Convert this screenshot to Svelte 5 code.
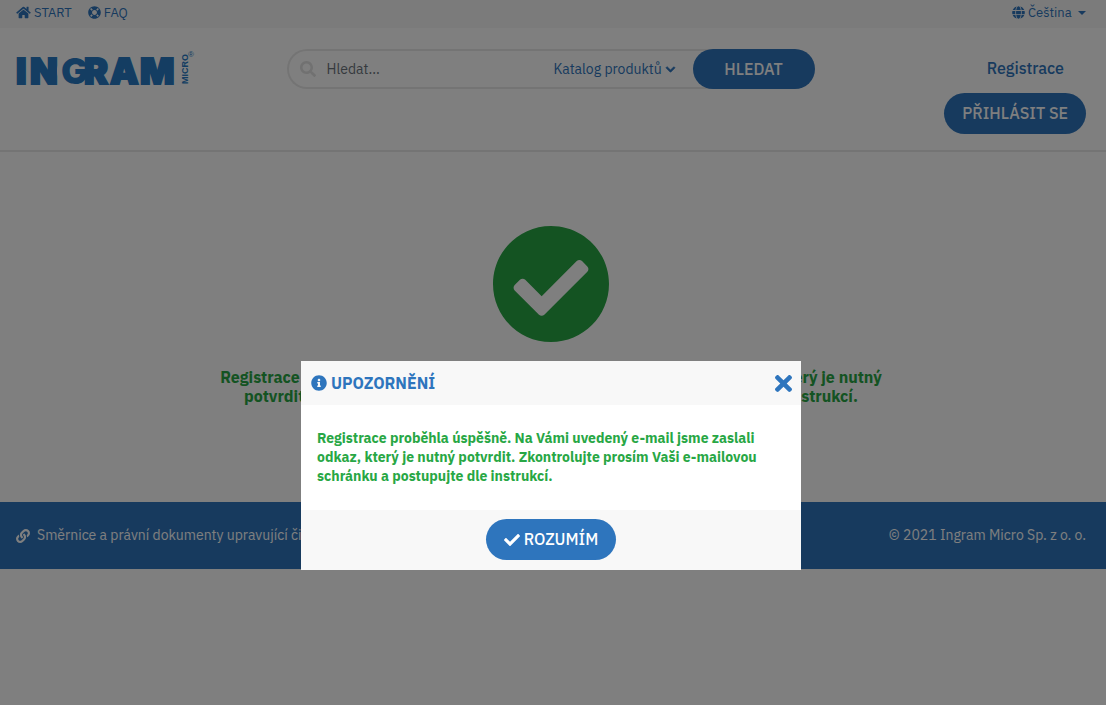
<script lang="ts">
  let search = ''
  let showModal = true

  const closeModal = () => (showModal = false)

  const icons = {
    home: {
      box: '0 0 576 512',
      d: 'M280.37 148.26L96 300.11V464a16 16 0 0 0 16 16l112.06-.29a16 16 0 0 0 15.92-16V368a16 16 0 0 1 16-16h64a16 16 0 0 1 16 16v95.64a16 16 0 0 0 16 16.05L464 480a16 16 0 0 0 16-16V300L295.67 148.26a12.19 12.19 0 0 0-15.3 0zM571.6 251.47L488 182.56V44.05a12 12 0 0 0-12-12h-56a12 12 0 0 0-12 12v72.61L318.47 43a48 48 0 0 0-61 0L4.34 251.47a12 12 0 0 0-1.6 16.9l25.5 31A12 12 0 0 0 45.15 301l235.22-193.74a12.19 12.19 0 0 1 15.3 0L530.9 301a12 12 0 0 0 16.9-1.6l25.5-31a12 12 0 0 0-1.7-16.93z'
    },
    ring: {
      box: '0 0 512 512',
      d: 'M256 8C119.033 8 8 119.033 8 256s111.033 248 248 248 248-111.033 248-248S392.967 8 256 8zm173.696 119.559l-63.399 63.399c-10.987-18.559-26.67-34.252-45.255-45.255l63.399-63.399a218.396 218.396 0 0 1 45.255 45.255zM256 352c-53.019 0-96-42.981-96-96s42.981-96 96-96 96 42.981 96 96-42.981 96-96 96zM127.559 82.304l63.399 63.399c-18.559 10.987-34.252 26.67-45.255 45.255l-63.399-63.399a218.372 218.372 0 0 1 45.255-45.255zM82.304 384.441l63.399-63.399c10.987 18.559 26.67 34.252 45.255 45.255l-63.399 63.399a218.396 218.396 0 0 1-45.255-45.255zm302.137 45.255l-63.399-63.399c18.559-10.987 34.252-26.67 45.255-45.255l63.399 63.399a218.403 218.403 0 0 1-45.255 45.255z'
    },
    globe: {
      box: '0 0 496 512',
      d: 'M336.5 160C322 70.7 287.8 8 248 8s-74 62.7-88.5 152h177zM152 256c0 22.2 1.2 43.5 3.3 64h185.3c2.1-20.5 3.3-41.8 3.3-64s-1.2-43.5-3.3-64H155.3c-2.1 20.5-3.3 41.8-3.3 64zm324.7-96c-28.6-67.9-86.5-120.4-158-141.6 24.4 33.8 41.2 84.7 50 141.6h108zM177.2 18.4C105.8 39.6 47.8 92.1 19.3 160h108c8.7-56.9 25.5-107.8 49.9-141.6zM487.4 192H372.7c2.1 21 3.3 42.5 3.3 64s-1.2 43-3.3 64h114.6c5.5-20.5 8.6-41.8 8.6-64s-3.1-43.5-8.5-64zM120 256c0-21.5 1.2-43 3.3-64H8.6C3.2 212.5 0 233.8 0 256s3.2 43.5 8.6 64h114.6c-2-21-3.2-42.5-3.2-64zm39.5 96c14.5 89.3 48.7 152 88.5 152s74-62.7 88.5-152h-177zm159.3 141.6c71.4-21.2 129.4-73.7 158-141.6h-108c-8.8 56.9-25.6 107.8-50 141.6zM19.3 352c28.6 67.9 86.5 120.4 158 141.6-24.4-33.8-41.2-84.7-50-141.6h-108z'
    },
    caret: { box: '0 0 8 4', d: 'M0 0h8L4 4z' },
    search: {
      box: '0 0 512 512',
      d: 'M505 442.7L405.3 343c-4.5-4.5-10.6-7-17-7H372c27.6-35.3 44-79.7 44-128C416 93.1 322.9 0 208 0S0 93.1 0 208s93.1 208 208 208c48.3 0 92.7-16.4 128-44v16.3c0 6.4 2.5 12.5 7 17l99.7 99.7c9.4 9.4 24.6 9.4 33.9 0l28.3-28.3c9.4-9.4 9.4-24.6.1-34zM208 336c-70.7 0-128-57.2-128-128 0-70.7 57.2-128 128-128 70.7 0 128 57.2 128 128 0 70.7-57.2 128-128 128z'
    },
    chevron: {
      box: '0 0 448 512',
      d: 'M207.029 381.476L12.686 187.132c-9.373-9.373-9.373-24.569 0-33.941l22.667-22.667c9.357-9.357 24.522-9.375 33.901-.04L224 284.505l154.745-154.021c9.379-9.335 24.544-9.317 33.901.04l22.667 22.667c9.373 9.373 9.373 24.569 0 33.941L240.971 381.476c-9.373 9.372-24.569 9.372-33.942 0z'
    },
    checkCircle: {
      box: '8 8 496 496',
      d: 'M504 256c0 136.967-111.033 248-248 248S8 392.967 8 256 119.033 8 256 8s248 111.033 248 248zM227.314 387.314l184-184c6.248-6.248 6.248-16.379 0-22.627l-22.627-22.627c-6.248-6.249-16.379-6.249-22.628 0L216 308.118l-70.059-70.059c-6.248-6.248-16.379-6.248-22.628 0l-22.627 22.627c-6.248 6.248-6.248 16.379 0 22.627l104 104c6.249 6.249 16.379 6.249 22.628.001z'
    },
    info: {
      box: '0 0 512 512',
      d: 'M256 8C119.043 8 8 119.083 8 256c0 136.997 111.043 248 248 248s248-111.003 248-248C504 119.083 392.957 8 256 8zm0 110c23.196 0 42 18.804 42 42s-18.804 42-42 42-42-18.804-42-42 18.804-42 42-42zm56 254c0 6.627-5.373 12-12 12h-88c-6.627 0-12-5.373-12-12v-24c0-6.627 5.373-12 12-12h12v-64h-12c-6.627 0-12-5.373-12-12v-24c0-6.627 5.373-12 12-12h64c6.627 0 12 5.373 12 12v100h12c6.627 0 12 5.373 12 12v24z'
    },
    times: {
      box: '0 80 352 352',
      d: 'M242.72 256l100.07-100.07c12.28-12.28 12.28-32.19 0-44.48l-22.24-22.24c-12.28-12.28-32.19-12.28-44.48 0L176 189.28 75.93 89.21c-12.28-12.28-32.19-12.28-44.48 0L9.21 111.45c-12.28 12.28-12.28 32.19 0 44.48L109.28 256 9.21 356.07c-12.28 12.28-12.28 32.19 0 44.48l22.24 22.24c12.28 12.28 32.2 12.28 44.48 0L176 322.72l100.07 100.07c12.28 12.28 32.2 12.28 44.48 0l22.24-22.24c12.28-12.28 12.28-32.19 0-44.48L242.72 256z'
    },
    check: {
      box: '0 0 512 512',
      d: 'M173.898 439.404l-166.4-166.4c-9.997-9.997-9.997-26.206 0-36.204l36.203-36.204c9.997-9.998 26.207-9.998 36.204 0L192 312.69 432.095 72.596c9.997-9.997 26.207-9.997 36.204 0l36.203 36.204c9.997 9.997 9.997 26.206 0 36.204l-294.4 294.401c-9.998 9.997-26.207 9.997-36.204-.001z'
    },
    link: {
      box: '0 0 512 512',
      d: 'M326.612 185.391c59.747 59.809 58.927 155.698.36 214.59-.11.12-.24.25-.36.37l-67.2 67.2c-59.27 59.27-155.699 59.262-214.96 0-59.27-59.26-59.27-155.7 0-214.96l37.106-37.106c9.84-9.84 26.786-3.3 27.294 10.606.648 17.722 3.826 35.527 9.69 52.721 1.986 5.822.567 12.262-3.783 16.612l-13.087 13.087c-28.026 28.026-28.905 73.66-1.155 101.96 28.024 28.579 74.086 28.749 102.325.51l67.2-67.19c28.191-28.191 28.073-73.757 0-101.83-3.701-3.694-7.429-6.564-10.341-8.569a16.037 16.037 0 0 1-6.947-12.606c-.396-10.567 3.348-21.456 11.698-29.806l21.054-21.055c5.521-5.521 14.182-6.199 20.584-1.731a152.482 152.482 0 0 1 20.522 17.197zM467.547 44.449c-59.261-59.262-155.69-59.27-214.96 0l-67.2 67.2c-.12.12-.25.25-.36.37-58.566 58.892-59.387 154.781.36 214.59a152.454 152.454 0 0 0 20.521 17.196c6.402 4.468 15.064 3.789 20.584-1.731l21.054-21.055c8.35-8.35 12.094-19.239 11.698-29.806a16.037 16.037 0 0 0-6.947-12.606c-2.912-2.005-6.64-4.875-10.341-8.569-28.073-28.073-28.191-73.639 0-101.83l67.2-67.19c28.239-28.239 74.3-28.069 102.325.51 27.75 28.3 26.872 73.934-1.155 101.96l-13.087 13.087c-4.35 4.35-5.769 10.79-3.783 16.612 5.864 17.194 9.042 34.999 9.69 52.721.509 13.906 17.454 20.446 27.294 10.606l37.106-37.106c59.271-59.259 59.271-155.699.001-214.959z'
    }
  }
</script>

{#snippet icon(name: keyof typeof icons, size: string)}
  <svg class="icon {size}" viewBox={icons[name].box} aria-hidden="true">
    <path d={icons[name].d} />
  </svg>
{/snippet}

<nav class="topbar">
  <a href="#start">{@render icon('home', 'i15')}START</a>
  <a href="#faq">{@render icon('ring', 'i13')}FAQ</a>
  <label class="language">
    {@render icon('globe', 'i13')}
    <select aria-label="Jazyk">
      <option>Čeština</option>
    </select>
    {@render icon('caret', 'i8')}
  </label>
</nav>

<header>
  <a class="logo" href="#home" aria-label="Ingram Micro">
    <svg width="182" height="42" viewBox="0 0 182 42">
      <g class="wordmark">
        <text x="0" y="35">I</text>
        <text x="14" y="35">N</text>
      </g>
      <!-- the G sits in a light disc that bites into the N -->
      <ellipse cx="57" cy="22" rx="16" ry="17" fill="#fff" />
      <g class="wordmark">
        <text x="68" y="35">R</text>
        <text x="94" y="35">A</text>
        <text x="124" y="35">M</text>
      </g>
      <text class="g" x="45" y="35">G</text>
      <text class="micro" transform="translate(172 35) rotate(-90)">MICRO</text>
      <text class="reg" x="172" y="8">®</text>
    </svg>
  </a>

  <form class="search" on:submit|preventDefault>
    <div class="field">
      {@render icon('search', 'i16')}
      <input type="text" placeholder="Hledat..." aria-label="Hledat" bind:value={search} />
      <label class="catalog">
        <select aria-label="Katalog">
          <option>Katalog produktů</option>
        </select>
        {@render icon('chevron', 'i9')}
      </label>
    </div>
    <button class="btn submit">HLEDAT</button>
  </form>

  <div class="account">
    <a href="#register">Registrace</a>
    <button class="btn">PŘIHLÁSIT SE</button>
  </div>
</header>

<main>
  {@render icon('checkCircle', 'big')}
  <p>
    Registrace proběhla úspěšně. Na Vámi uvedený e-mail jsme zaslali odkaz, který je nutný<br />
    potvrdit. Zkontrolujte prosím Vaši e-mailovou schránku a postupujte dle instrukcí.
  </p>
</main>

<footer>
  <a href="#documents">{@render icon('link', 'i14')}Směrnice a právní dokumenty upravující činnost</a>
  <span>© 2021 Ingram Micro Sp. z o. o.</span>
</footer>

{#if showModal}
  <div class="overlay">
    <div class="modal" role="dialog" aria-modal="true" aria-labelledby="modal-title">
      <div class="modal-head">
        {@render icon('info', 'i16')}
        <h2 id="modal-title">UPOZORNĚNÍ</h2>
        <button class="close" aria-label="Zavřít" on:click={closeModal}>
          {@render icon('times', 'i17')}
        </button>
      </div>
      <p class="modal-body">
        Registrace proběhla úspěšně. Na Vámi uvedený e-mail jsme zaslali<br />
        odkaz, který je nutný potvrdit. Zkontrolujte prosím Vaši e-mailovou<br />
        schránku a postupujte dle instrukcí.
      </p>
      <div class="modal-foot">
        <button class="btn" on:click={closeModal}>{@render icon('check', 'i16')}ROZUMÍM</button>
      </div>
    </div>
  </div>
{/if}

<style>
  :global(body) {
    background: #fff;
    color: #2e75bd;
    font-family: 'IBM Plex Sans', 'Open Sans', sans-serif;
    font-size: 14px;
    line-height: 19px;
  }

  a {
    color: inherit;
    text-decoration: none;
  }

  button,
  input,
  select {
    font: inherit;
    color: inherit;
    border: 0;
    padding: 0;
    background: none;
  }

  select {
    appearance: none;
  }

  .icon {
    display: block;
    flex: none;
    fill: currentColor;
  }

  .i8 {
    width: 8px;
    height: 4px;
  }

  .i9 {
    width: 9px;
    height: 11px;
    overflow: visible;
    stroke: currentColor;
    stroke-width: 36px;
  }

  .i13 {
    width: 13px;
    height: 13px;
  }

  .i14 {
    width: 14px;
    height: 14px;
  }

  .i15 {
    width: 15px;
    height: 13px;
  }

  .i16 {
    width: 16px;
    height: 16px;
  }

  .i17 {
    width: 17px;
    height: 17px;
  }

  .btn {
    display: flex;
    align-items: center;
    justify-content: center;
    gap: 4px;
    height: 41px;
    padding: 0 18px;
    border-radius: 21px;
    background: #2e75bd;
    color: #fff;
    font-size: 16px;
    font-weight: 500;
    white-space: nowrap;
  }

  .topbar {
    display: flex;
    align-items: center;
    gap: 16px;
    height: 28px;
    padding: 0 20px 3px 16px;
    box-sizing: border-box;
    background: #f7f7f7;
    font-size: 13px;
  }

  .topbar a,
  .language {
    display: flex;
    align-items: center;
    gap: 3px;
  }

  .language {
    margin-left: auto;
  }

  .language .i8 {
    margin-left: 3px;
  }

  header {
    display: grid;
    grid-template-columns: 1fr 2fr 1fr;
    align-items: start;
    padding: 21px 4px 16px 0;
    border-bottom: 2px solid #e9e9e9;
  }

  .logo {
    padding-left: 16px;
  }

  .logo svg {
    display: block;
    overflow: visible;
    fill: #287bc4;
  }

  .wordmark,
  .g {
    font-family: Inter, sans-serif;
    font-size: 36px;
    font-weight: 900;
  }

  .wordmark {
    stroke: #287bc4;
    stroke-width: 2px;
  }

  .micro {
    font-family: 'Liberation Sans', sans-serif;
    font-size: 9px;
    font-weight: 700;
  }

  .reg {
    font-family: 'Liberation Sans', sans-serif;
    font-size: 8px;
  }

  .search {
    display: flex;
    margin: 0 12px 0 11px;
  }

  .field {
    display: flex;
    flex: 1;
    align-items: center;
    min-width: 0;
    height: 40px;
    margin-right: -20px;
    padding: 0 38px 0 11px;
    box-sizing: border-box;
    border: 2px solid #e9e9e9;
    border-right: 0;
    border-radius: 20px 0 0 20px;
    color: #e2e2e2;
  }

  .field input {
    flex: 1;
    min-width: 0;
    margin-left: 11px;
    outline: 0;
    color: #6c757d;
  }

  .field input::placeholder {
    color: #6c757d;
    opacity: 1;
  }

  .catalog {
    display: flex;
    align-items: center;
    gap: 3px;
    color: #2e75bd;
  }

  .submit {
    width: 122px;
    height: 40px;
  }

  .account {
    display: flex;
    flex-direction: column;
    align-items: flex-end;
    gap: 15px;
    padding: 10px 16px 0 0;
  }

  .account a {
    margin-right: 22px;
    font-size: 16px;
    font-weight: 500;
  }

  main {
    display: flex;
    flex-direction: column;
    align-items: center;
    gap: 26px;
    padding: 74px 4px 96px 0;
    color: #28a745;
  }

  .big {
    width: 116px;
    height: 116px;
  }

  main p {
    margin: 0;
    font-size: 16px;
    font-weight: 700;
    text-align: center;
  }

  footer {
    display: flex;
    align-items: center;
    justify-content: space-between;
    height: 67px;
    padding: 0 20px 0 16px;
    background: #2e75bd;
    color: #fff;
  }

  footer a {
    display: flex;
    align-items: center;
    gap: 7px;
  }

  .overlay {
    position: fixed;
    inset: 0;
    display: flex;
    align-items: flex-start;
    justify-content: center;
    padding: 361px 4px 0 0;
    background: rgba(0, 0, 0, 0.5);
  }

  .modal {
    width: 500px;
    max-width: 100%;
    background: #fff;
  }

  .modal-head {
    display: flex;
    align-items: center;
    gap: 4px;
    height: 44px;
    padding: 0 9px 0 10px;
    background: #f8f8f8;
  }

  h2 {
    flex: 1;
    margin: 0;
    font-size: 16px;
    font-weight: 700;
  }

  .close {
    cursor: pointer;
  }

  .modal-body {
    margin: 0;
    padding: 24px 16px;
    color: #28a745;
    font-weight: 700;
  }

  .modal-foot {
    display: flex;
    justify-content: center;
    padding: 9px 0 10px;
    background: #f8f8f8;
  }
</style>
